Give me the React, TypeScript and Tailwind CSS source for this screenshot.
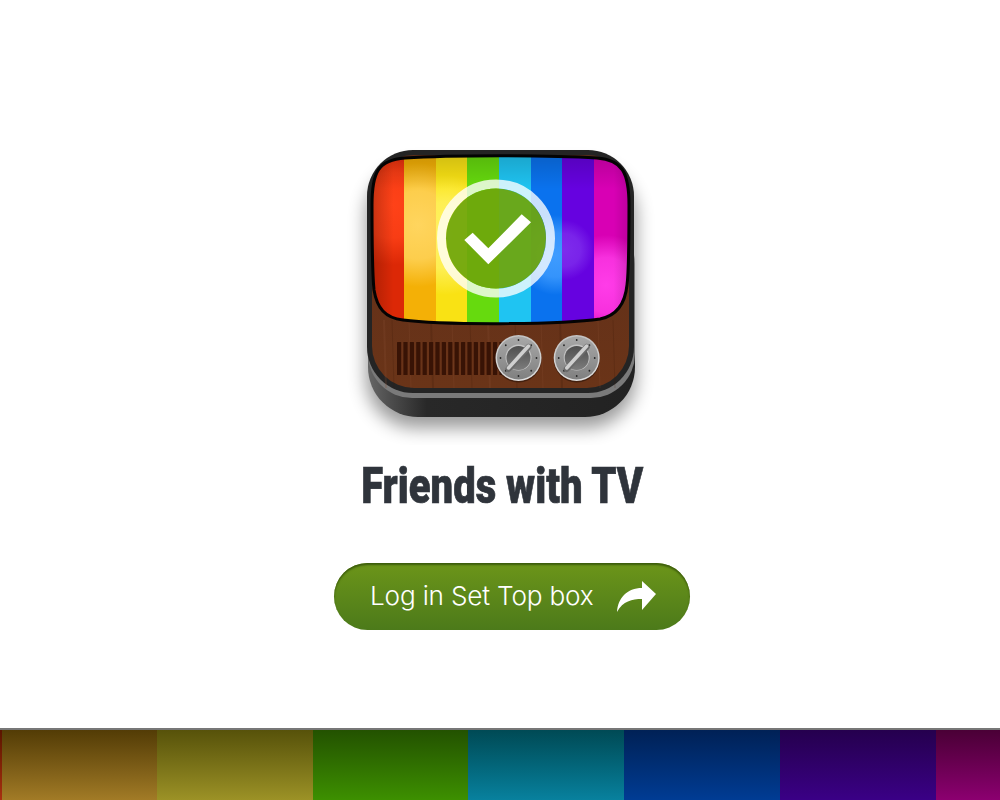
import React from "react";

const stripes = [
  { x: 370, w: 34, c: "#dc2806" },
  { x: 404, w: 32, c: "#f4b006" },
  { x: 436, w: 31, c: "#f9e214" },
  { x: 467, w: 32, c: "#66da0e" },
  { x: 499, w: 32, c: "#1fc4f2" },
  { x: 531, w: 31, c: "#0a72ee" },
  { x: 562, w: 32, c: "#6602e0" },
  { x: 594, w: 38, c: "#d800b4" },
];

// lit areas of the tube, each kept inside its own stripe
const glows = [
  { id: "glowRed", x: 370, w: 34, cx: 392, cy: 205, r: 60, c: "#ff4218" },
  { id: "glowOrange", x: 404, w: 32, cx: 418, cy: 225, r: 62, c: "#ffd55e" },
  { id: "glowYellow", x: 436, w: 31, cx: 445, cy: 235, r: 60, c: "#fff262" },
  { id: "glowBlue", x: 531, w: 31, cx: 556, cy: 255, r: 40, c: "#3f9cff" },
  { id: "glowPurple", x: 562, w: 32, cx: 564, cy: 250, r: 30, c: "#7e2cec" },
  { id: "glowPink", x: 594, w: 38, cx: 606, cy: 285, r: 50, c: "#ff3ce8" },
];

const screenPath =
  "M372 205C372 172 378 160 405 158C450 155 550 155 597 158C622 160 629 172 629 205C629 250 629 270 627 285C625 305 615 316 600 319C560 325 440 325 403 320C385 318 377 308 374 290C372 270 372 240 372 205Z";

const Knob = ({ cx, cy }: { cx: number; cy: number }) => {
  const rivets = Array.from({ length: 8 }, (_, i) => (i * Math.PI) / 4);
  return (
    <g>
      <circle cx={cx} cy={cy + 1.5} r={23} fill="#1e0c04" opacity={0.5} />
      <circle cx={cx} cy={cy} r={23} fill="url(#knobEdge)" />
      <circle cx={cx} cy={cy} r={21.5} fill="url(#knobFace)" />
      {rivets.map((a, i) => (
        <circle key={i} cx={cx + Math.cos(a) * 18} cy={cy + Math.sin(a) * 18} r={0.9} fill="#262626" />
      ))}
      <circle cx={cx} cy={cy - 0.5} r={13} fill="#c4c4c4" />
      <circle cx={cx} cy={cy} r={12} fill="url(#knobDish)" />
      <path d={`M${cx - 10} ${cy + 11}L${cx + 10} ${cy - 11}`} stroke="#6a6a6a" strokeWidth={6} strokeLinecap="round" />
      <path d={`M${cx - 10} ${cy + 10}L${cx + 10} ${cy - 12}`} stroke="#cfcfcf" strokeWidth={3.5} strokeLinecap="round" />
    </g>
  );
};

const TvIcon = () => (
  <svg width="320" height="320" viewBox="340 125 320 320" className="block">
    <defs>
      <filter id="blur12" x="-30%" y="-30%" width="160%" height="160%">
        <feGaussianBlur stdDeviation="9" />
      </filter>
      <linearGradient id="base" x1="0" x2="1" y1="0" y2="0">
        <stop offset="0" stopColor="#666666" />
        <stop offset="0.08" stopColor="#4e4e4e" />
        <stop offset="0.22" stopColor="#282828" />
        <stop offset="1" stopColor="#222222" />
      </linearGradient>
      <linearGradient id="wood" x1="0" x2="0" y1="0" y2="1">
        <stop offset="0" stopColor="#5f2e1a" />
        <stop offset="1" stopColor="#6a3418" />
      </linearGradient>
      <linearGradient id="knobEdge" x1="0" x2="0" y1="0" y2="1">
        <stop offset="0" stopColor="#c2c2c2" />
        <stop offset="1" stopColor="#dedede" />
      </linearGradient>
      <linearGradient id="knobFace" x1="0" x2="0" y1="0" y2="1">
        <stop offset="0" stopColor="#a8a8a8" />
        <stop offset="1" stopColor="#808080" />
      </linearGradient>
      <linearGradient id="knobDish" x1="0" x2="0" y1="0" y2="1">
        <stop offset="0" stopColor="#4e4e4e" />
        <stop offset="1" stopColor="#7c7c7c" />
      </linearGradient>
      <linearGradient id="screenTop" x1="0" x2="0" y1="0" y2="1">
        <stop offset="0" stopColor="#000" stopOpacity="0.16" />
        <stop offset="0.2" stopColor="#000" stopOpacity="0" />
        <stop offset="1" stopColor="#000" stopOpacity="0" />
      </linearGradient>
      <linearGradient id="screenSides" x1="0" x2="1" y1="0" y2="0">
        <stop offset="0" stopColor="#000" stopOpacity="0.22" />
        <stop offset="0.09" stopColor="#000" stopOpacity="0" />
        <stop offset="0.93" stopColor="#000" stopOpacity="0" />
        <stop offset="1" stopColor="#000" stopOpacity="0.16" />
      </linearGradient>
      {glows.map((g) => (
        <radialGradient key={g.id} id={g.id} gradientUnits="userSpaceOnUse" cx={g.cx} cy={g.cy} r={g.r}>
          <stop offset="0" stopColor={g.c} />
          <stop offset="0.55" stopColor={g.c} stopOpacity="0.8" />
          <stop offset="1" stopColor={g.c} stopOpacity="0" />
        </radialGradient>
      ))}
      <clipPath id="screenClip">
        <path d={screenPath} />
      </clipPath>
    </defs>

    {/* shadow */}
    <rect x="366" y="166" width="270" height="262" rx="50" fill="#000" opacity="0.4" filter="url(#blur12)" />

    {/* base and body */}
    <rect x="368" y="260" width="267" height="157" rx="50" fill="url(#base)" />
    <rect x="368" y="220" width="267" height="178" rx="44" fill="#7a7a7a" />
    <rect x="367" y="150" width="267" height="243" rx="46" fill="#242424" />
    <rect x="372" y="155" width="257" height="233" rx="42" fill="url(#wood)" />

    {/* wood grain */}
    {[384, 392, 409, 431, 452, 470, 488, 515, 541, 560, 598, 613].map((x, i) => (
      <path
        key={x}
        d={`M${x} 320L${x + 2} 388`}
        stroke={i % 2 ? "#3d1a08" : "#8a5034"}
        strokeWidth={i % 3 === 0 ? 2 : 1}
        opacity={0.22}
      />
    ))}

    {/* grille */}
    {Array.from({ length: 17 }, (_, i) => (
      <rect key={i} x={397 + i * 6.4} y="342" width="4.2" height="33" rx="0.5" fill="#381305" />
    ))}

    <Knob cx={518.5} cy={358} />
    <Knob cx={576.7} cy={358} />

    {/* screen */}
    <g clipPath="url(#screenClip)">
      {stripes.map((s) => (
        <rect key={s.x} x={s.x} y="150" width={s.w} height="180" fill={s.c} />
      ))}
      {glows.map((g) => (
        <rect key={g.id} x={g.x} y="150" width={g.w} height="180" fill={`url(#${g.id})`} />
      ))}
      <rect x="370" y="155" width="262" height="170" fill="url(#screenTop)" />
      <rect x="370" y="155" width="262" height="170" fill="url(#screenSides)" />
    </g>
    <path d={screenPath} fill="none" stroke="#030303" strokeWidth="3" />

    {/* check badge */}
    <circle cx="496" cy="238.5" r="54.5" fill="none" stroke="#ffffff" strokeOpacity="0.78" strokeWidth="9" />
    <circle cx="496" cy="238.5" r="50" fill="#6fa60c" fillOpacity="0.93" />
    <polygon points="464.3,240 488.3,264.3 531,222.3 521.7,214.3 488.3,248.3 472.7,232.7" fill="#ffffff" />
  </svg>
);

const stripStyles = [
  "w-[1.5px] bg-gradient-to-b from-[#5a1500] to-[#a83010]",
  "w-[155.5px] bg-gradient-to-b from-[#533c06] to-[#a27b26]",
  "w-[156px] bg-gradient-to-b from-[#57520a] to-[#9c9226]",
  "w-[155px] bg-gradient-to-b from-[#235200] to-[#3d9000]",
  "w-[156px] bg-gradient-to-b from-[#004a55] to-[#08819e]",
  "w-[156px] bg-gradient-to-b from-[#002156] to-[#003c94]",
  "w-[156px] bg-gradient-to-b from-[#25004e] to-[#3a0086]",
  "flex-1 bg-gradient-to-b from-[#4a0036] to-[#8c0070]",
];

export default function App() {
  return (
    <div className="flex h-[800px] w-[1000px] flex-col overflow-hidden bg-white">
      <div className="flex flex-1 flex-col items-center">
        <div className="mt-[125px]">
          <TvIcon />
        </div>
        <h1 className="mt-[10px] ml-1 scale-x-[0.8] text-center font-['Roboto',sans-serif] text-[50px] leading-[62px] font-black whitespace-nowrap text-[#2f343b] [-webkit-text-stroke:0.7px_#2f343b]">
          Friends with TV
        </h1>
        <button className="mt-[46px] ml-6 flex h-[67px] w-[356px] items-center rounded-full bg-gradient-to-b from-[#6c9519] to-[#4c7a1a] pl-9 shadow-[inset_0_2px_2px_#3c5c0c]">
          <span className="font-['Inter',sans-serif] text-[26.2px] leading-none font-light tracking-[-0.2px] text-white">
            Log in Set Top box
          </span>
          <svg width="40" height="32" viewBox="0 0 40 32" className="ml-[23px]">
            <path d="M25 0L39 13L25 29V18C15 18 6 20 0 31C1 17 10 7 25 7Z" fill="#ffffff" />
          </svg>
        </button>
      </div>
      <div className="flex h-[72px] border-t-2 border-[#777777]">
        {stripStyles.map((cls) => (
          <div key={cls} className={cls} />
        ))}
      </div>
    </div>
  );
}
